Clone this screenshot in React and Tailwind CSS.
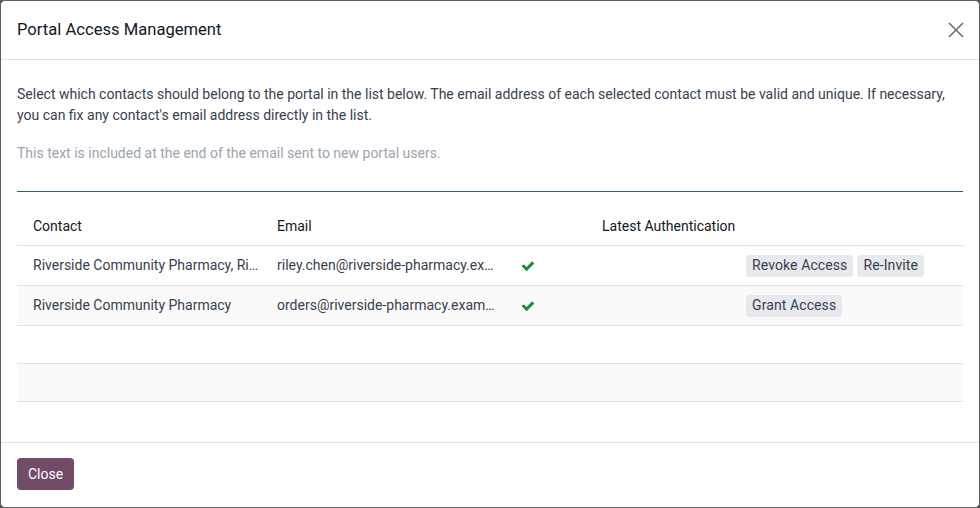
import React from "react";

const Check = () => (
  <svg width="14" height="14" viewBox="0 0 1792 1792" className="text-[#1b8a3a]">
    <path fill="currentColor" d="M1671 566q0 40-28 68l-724 724-136 136q-28 28-68 28t-68-28l-136-136-362-362q-28-28-28-68t28-68l136-136q28-28 68-28t68 28l294 295 656-657q28-28 68-28t68 28l136 136q28 28 28 68z" />
  </svg>
);

const Btn = ({ children }) => (
  <span className="inline-flex h-[22px] items-center rounded-[4px] bg-[#e7e9ed] px-[6px] text-[14px] tracking-[0.1px] text-[#374151]">{children}</span>
);

const rows = [
  { contact: "Riverside Community Pharmacy, Riley Chen", email: "riley.chen@riverside-pharmacy.example.com", buttons: ["Revoke Access", "Re-Invite"] },
  { contact: "Riverside Community Pharmacy", email: "orders@riverside-pharmacy.example.com", buttons: ["Grant Access"] },
];

export default function App() {
  return (
    <div className="h-[508px] w-[980px] bg-[#555]" style={{ fontFamily: "Roboto, 'Liberation Sans', sans-serif" }}>
      <div className="flex h-full w-full flex-col overflow-hidden rounded-[5px] border border-[#5f5f5f] bg-white">
        <div className="flex h-[59px] shrink-0 items-center justify-between border-b border-[#dee2e6] pl-4 pr-[15px]">
          <h4 className="text-[16.6px] text-[#111827]">Portal Access Management</h4>
          <svg width="16" height="16" viewBox="0 0 16 16" className="text-[#6b6f75]">
            <path d="M1 1L15 15M15 1L1 15" stroke="currentColor" strokeWidth="1.6" fill="none" />
          </svg>
        </div>
        <div className="flex-1 px-4 pt-[24px]">
          <p className="text-[14px] leading-[21px] text-[#374151]">
            Select which contacts should belong to the portal in the list below. The email address of each selected contact must be valid and unique. If necessary, you can fix any contact's email address directly in the list.
          </p>
          <div className="mt-[17px] h-[49px] border-b border-[#1d6a6d] text-[14px] leading-[21px] text-[#9ca3af]">
            This text is included at the end of the email sent to new portal users.
          </div>
          <div className="mt-[14px] text-[14px] text-[#374151]">
            <div className="flex h-[40px] items-center border-b border-[#dee2e6] pt-[1px] text-[#111827]">
              <div className="w-[254px] pl-4">Contact</div>
              <div className="w-[240px] pl-[6px]">Email</div>
              <div className="w-[85px]"></div>
              <div className="w-[144px] pl-[6px]">Latest Authentication</div>
              <div className="flex-1"></div>
            </div>
            {rows.map((r, i) => (
              <div key={i} className={`flex h-[40px] items-center border-b border-[#dee2e6] ${i % 2 === 1 ? "bg-[#fafafa]" : "bg-white"}`}>
                <div className="w-[254px] truncate pl-4 pr-[10px]">{r.contact}</div>
                <div className="w-[240px] truncate pl-[6px] pr-[14px]">{r.email}</div>
                <div className="flex w-[85px] pl-[10px]"><Check /></div>
                <div className="w-[144px]"></div>
                <div className="flex flex-1 gap-[4px] pl-[6px]">
                  {r.buttons.map((b) => <Btn key={b}>{b}</Btn>)}
                </div>
              </div>
            ))}
            <div className="h-[38px] border-b border-[#dee2e6] bg-white"></div>
            <div className="h-[38px] border-b border-[#dee2e6] bg-[#fafafa]"></div>
          </div>
        </div>
        <div className="flex h-[65px] shrink-0 items-start border-t border-[#dee2e6] px-4 pt-[15px]">
          <button className="h-[32px] rounded-[4px] bg-[#714b67] px-[11px] text-[14px] text-white">Close</button>
        </div>
      </div>
    </div>
  );
}
